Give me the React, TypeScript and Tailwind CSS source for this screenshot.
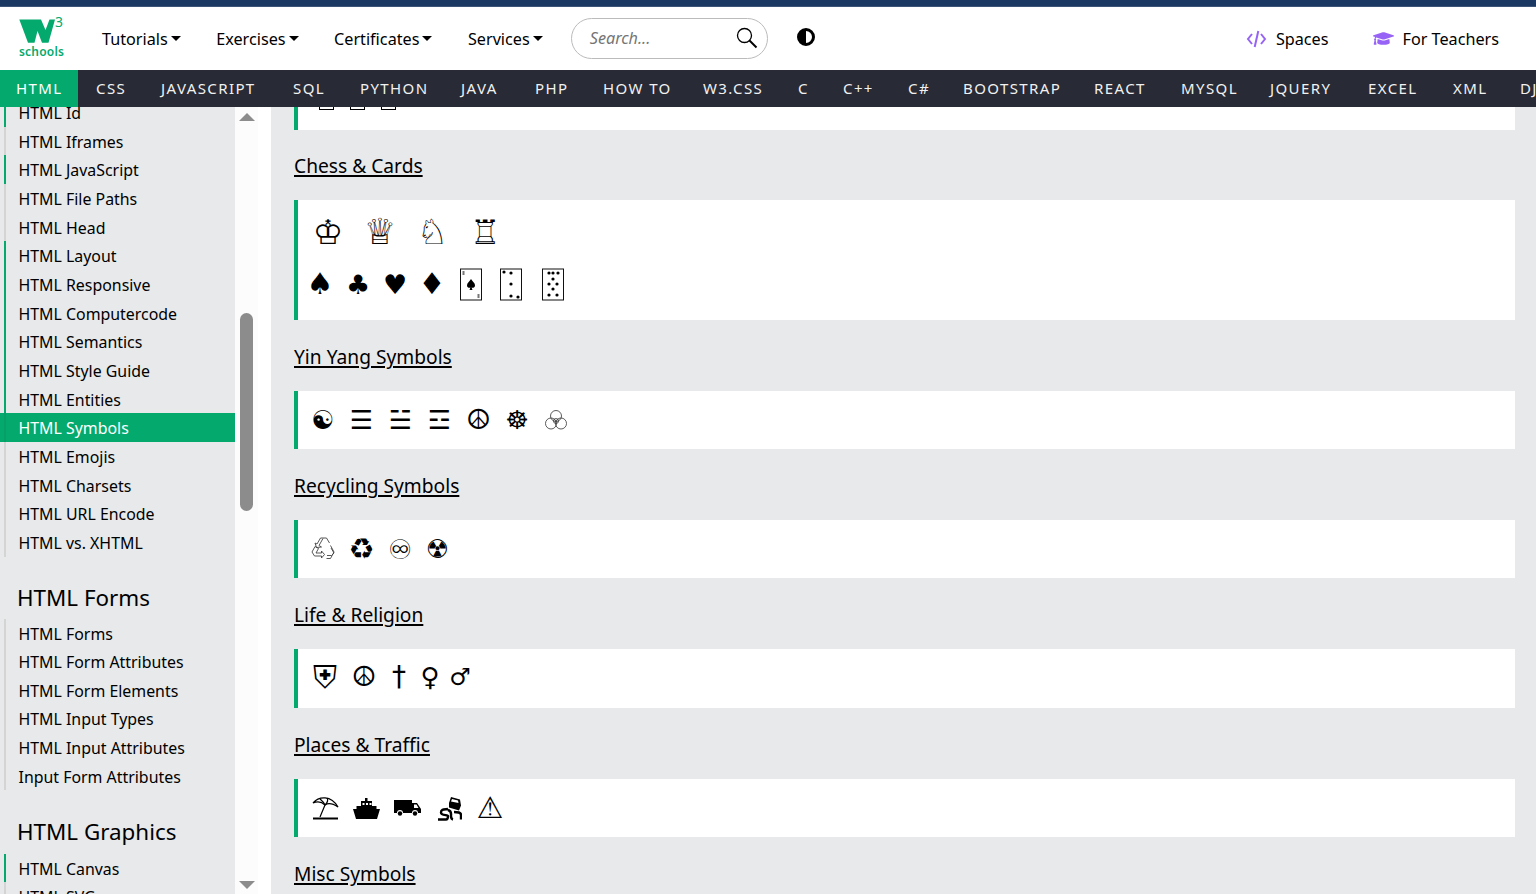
import type { ReactNode } from "react";
import { FaGraduationCap } from "react-icons/fa";

const topLinks = ["Tutorials", "Exercises", "Certificates", "Services"];
const subjects: [string, string][] = [
  ["CSS", "w-[65px]"], ["JAVASCRIPT", "w-[132px]"], ["SQL", "w-[67px]"], ["PYTHON", "w-[101px]"], ["JAVA", "w-[74px]"], ["PHP", "w-[68px]"],
  ["HOW TO", "w-[100px]"], ["W3.CSS", "w-[95px]"], ["C", "w-[45px]"], ["C++", "w-[65px]"], ["C#", "w-[55px]"], ["BOOTSTRAP", "w-[131px]"],
  ["REACT", "w-[87px]"], ["MYSQL", "w-[89px]"], ["JQUERY", "w-[98px]"], ["EXCEL", "w-[85px]"], ["XML", "w-[67px]"], ["DJANGO", "w-[100px]"],
];

const green = "bg-[#04AA6D]";
const gray = "bg-[#d4d4d4]";

const groupOne: [string, string][] = [
  ["HTML Id", green], ["HTML Iframes", gray], ["HTML JavaScript", green], ["HTML File Paths", gray], ["HTML Head", gray],
  ["HTML Layout", green], ["HTML Responsive", green], ["HTML Computercode", green], ["HTML Semantics", green], ["HTML Style Guide", green], ["HTML Entities", green],
  ["HTML Symbols", "bg-[#04a068]"], ["HTML Emojis", gray], ["HTML Charsets", gray], ["HTML URL Encode", gray], ["HTML vs. XHTML", gray],
];
const formLinks = ["HTML Forms", "HTML Form Attributes", "HTML Form Elements", "HTML Input Types", "HTML Input Attributes", "Input Form Attributes"];

function Pips({ pts, label }: { pts: [number, number][]; label: string }) {
  return (
    <svg viewBox="0 0 24 33" className="h-[33px] w-[24px]" aria-label={label}>
      <rect x="1.5" y="1" width="21" height="31" fill="white" stroke="#111" strokeWidth="1" />
      {pts.map(([x, y], i) => <circle key={i} cx={x} cy={y} r="1.6" fill="black" />)}
    </svg>
  );
}

const AceCard = (
  <svg viewBox="0 0 24 33" className="h-[33px] w-[24px]" aria-label="ace of spades">
    <rect x="1.5" y="1" width="21" height="31" fill="white" stroke="#111" strokeWidth="1" />
    <path d="M12 11c2 3 4 4 4 6.500a2.300 2.300 0 0 1-3.400 2l.9 2.500h-3l.9-2.500a2.300 2.300 0 0 1-3.400-2c0-2.500 2-3.500 4-6.500z" fill="black" />
    <rect x="3.500" y="3" width="2" height="4" fill="#777" />
    <rect x="18.500" y="26" width="2" height="4" fill="#777" />
  </svg>
);

const Biohazard = (
  <svg viewBox="0 0 24 24" className="h-[24px] w-[24px]" fill="none" stroke="#333" strokeWidth="0.8" aria-label="biohazard">
    <circle cx="12" cy="8" r="5.500" />
    <circle cx="7" cy="15.500" r="5.500" />
    <circle cx="17" cy="15.500" r="5.500" />
    <circle cx="12" cy="13" r="2.500" />
  </svg>
);

const Recycle = (
  <svg viewBox="0 0 24 24" className="h-[24px] w-[24px]" fill="none" stroke="#444" strokeWidth="0.9" aria-label="recycling">
    <path d="M12 1.500L8 8.500l2.500 1.500-5 .5L4 6l2 1 3.500-6h6l3 5" />
    <path d="M1 15l-.0 .0L4 9.500l3.500 2L5 16h5.500v-2l3 3.500-3 3.500v-2H3.500z" />
    <path d="M19.500 8.500L23 15l-3.500 6.500h-4M20 11l3 5-2.500 2.500H16" />
  </svg>
);

const Umbrella = (
  <svg viewBox="0 0 27 24" className="h-[24px] w-[27px]" fill="none" stroke="black" strokeWidth="1.200" aria-label="umbrella on ground">
    <path d="M1 7C7 0 19 -1 26 11C20 7 16 7 13 9C10 6 6 5 1 7z" />
    <path d="M13 9L8 21M8 3c1 1 4 3 5 6M15 2c2 3 0 5-2 7" />
    <path d="M1 22.500h25" strokeWidth="2" />
  </svg>
);

const Ship = (
  <svg viewBox="0 0 27 21" className="h-[21px] w-[27px]" aria-label="ferry">
    <path d="M12 0h2.500v3H19v5h4.500v3H27l-3 10H3L0 11h3.500V8H8V3h4z" fill="black" />
    <rect x="9.500" y="5" width="2" height="2" fill="white" />
    <rect x="13" y="5" width="2" height="2" fill="white" />
    <rect x="16.500" y="5" width="2" height="2" fill="white" />
  </svg>
);

const Truck = (
  <svg viewBox="0 0 28 16" className="h-[16px] w-[28px]" aria-label="truck">
    <path d="M0 0h18v3h5l4 6v4h-3a3 3 0 0 0-6 0H9a3 3 0 0 0-6 0H0z" fill="black" />
    <path d="M20 4.500h2.500l2 3.500H20z" fill="white" />
    <circle cx="6" cy="13.500" r="2.200" fill="black" />
    <circle cx="21" cy="13.500" r="2.200" fill="black" />
  </svg>
);

const Slip = (
  <svg viewBox="0 0 24 25" className="h-[25px] w-[24px]" aria-label="slippery road">
    <path d="M11 7l2-6 9 2.500 1 6-2 5-10-3z" fill="black" />
    <path d="M14 3l6 1.500.5 2.500-7.500-1.500z" fill="white" />
    <path d="M0 23.500h8c2 0 2-2 2-3.500s-7 0-7-3.500 3-3 7-3.500M10 14c4 1 3 4 3 6s0 3 2 3.500M16 16c4 0 7 0 7 3v4.500" fill="none" stroke="black" strokeWidth="2.400" />
  </svg>
);

type Item = { w: string; node: ReactNode; cls?: string };

const g = (c: string, w: string, cls: string): Item => ({ w, cls, node: c });

const sections: { title: string; h: string; pt: string; pl: string; rows: Item[][] }[] = [
  {
    title: "Chess & Cards", h: "h-[120px]", pt: "pt-[16px]", pl: "pl-[4px]",
    rows: [
      [g("♔", "w-[52px]", "text-[34px]"), g("♕", "w-[52px]", "text-[36px]"), g("♘", "w-[53px]", "text-[35px]"), g("♖", "w-[52px]", "text-[34px]")],
      [
        g("♠", "w-[38px] -ml-[1px]", "text-[30px]"), g("♣", "w-[38px]", "text-[27px]"), g("♥", "w-[36px]", "text-[27px]"), g("♦", "w-[38px]", "text-[30px]"),
        { w: "w-[39px]", node: AceCard },
        { w: "w-[42px]", node: <Pips label="seven of clubs" pts={[[12, 5], [12, 16], [12, 28], [5, 4], [19, 29]]} /> },
        { w: "w-[41px]", node: <Pips label="nine of clubs" pts={[[8, 5], [12, 5], [17, 5], [12, 11], [8, 16], [16, 16], [12, 21], [8, 27], [16, 27]]} /> },
      ],
    ],
  },
  {
    title: "Yin Yang Symbols", h: "h-[58px]", pt: "pt-[13px]", pl: "pl-[6px]",
    rows: [[
      g("☯", "w-[38px]", "text-[26px]"), g("☰", "w-[39px]", "text-[26px]"), g("☱", "w-[39px]", "text-[26px]"), g("☲", "w-[39px]", "text-[26px]"),
      g("☮", "w-[39px]", "text-[28px]"), g("☸", "w-[38px]", "text-[26px]"), { w: "w-[39px]", node: Biohazard },
    ]],
  },
  {
    title: "Recycling Symbols", h: "h-[58px]", pt: "pt-[13px]", pl: "pl-[6px]",
    rows: [[{ w: "w-[38px]", node: Recycle }, g("♻", "w-[39px]", "text-[29px]"), g("♾", "w-[38px]", "text-[27px]"), g("☢", "w-[37px]", "text-[26px]")]],
  },
  {
    title: "Life & Religion", h: "h-[59px]", pt: "pt-[12px]", pl: "pl-[7px]",
    rows: [[g("⛨", "w-[40px]", "text-[32px]"), g("☮", "w-[38px]", "text-[28px]"), g("†", "w-[32px]", "text-[28px]"), g("♀", "w-[30px]", "text-[26px]"), g("♂", "w-[30px]", "text-[24px]")]],
  },
  {
    title: "Places & Traffic", h: "h-[58px]", pt: "pt-[13px]", pl: "pl-[7px]",
    rows: [[
      { w: "w-[41px]", node: Umbrella }, { w: "w-[41px]", node: Ship }, { w: "w-[42px]", node: Truck }, { w: "w-[41px]", node: Slip },
      g("⚠", "w-[40px]", "text-[30px]"),
    ]],
  },
];

function SideLink({ label, bar, active }: { label: string; bar: string; active?: boolean }) {
  return (
    <div className={`flex h-[28.67px] text-[15.900px] leading-[30.67px] whitespace-nowrap ${active ? "bg-[#04AA6D] text-white" : "text-black"}`}>
      <span className={`ml-[4px] h-full w-[2px] shrink-0 ${bar}`} />
      <span className="pl-[12.500px]">{label}</span>
    </div>
  );
}

export default function App() {
  return (
    <div className="h-[894px] w-[1536px] overflow-hidden bg-white font-['Noto_Sans',sans-serif] text-black">
      <div className="h-[7px] border-b border-[#3b5478] bg-[#1a3861]" />
      <header className="flex h-[63px] items-center">
        <svg viewBox="18 14 48 48" className="mb-[1px] ml-[18px] h-[48px] w-[48px] text-[#04AA6D]" aria-label="W3Schools">
          <path d="M19.300 19.500H41L45.500 30 49.500 19.500H55L48.500 42.700H42L37.500 31 34.500 42.700H28z" fill="currentColor" />
          <text x="55" y="26.500" fontSize="14" fontFamily="Noto Sans" fill="currentColor">3</text>
          <text x="19" y="56" fontSize="12" fontWeight="600" letterSpacing="0.200" fontFamily="Noto Sans" fill="currentColor">schools</text>
        </svg>
        <nav className="ml-[36px] flex gap-[35.500px] pt-[1px] text-[16.200px]">
          {topLinks.map((t) => (
            <span key={t} className="flex items-center gap-[3px]">
              {t}
              <span className="h-0 w-0 border-x-[5px] border-t-[5px] border-x-transparent border-t-black" />
            </span>
          ))}
        </nav>
        <div className="ml-[28px] mb-[1px] flex h-[41px] w-[197px] items-center justify-between rounded-full border border-[#bbb] pl-[18px] pr-[9px]">
          <span className="pt-[1px] text-[16.200px] italic text-[#757575]">Search...</span>
          <svg viewBox="0 0 22 22" className="h-[22px] w-[22px]" fill="none" stroke="black" strokeWidth="1.300">
            <circle cx="8.500" cy="8.500" r="7" />
            <path d="M13.500 13.500l7 7" strokeWidth="2" />
          </svg>
        </div>
        <div className="mb-[3px] ml-[29px] h-[18px] w-[18px] rounded-full border-[3px] border-black bg-[linear-gradient(90deg,#000_50%,#fff_50%)]" />
        <div className="ml-auto flex items-center pt-[1px] text-[16.200px]">
          <svg viewBox="0 0 20 18" className="h-[18px] w-[21px]" fill="none" stroke="#9763f6" strokeWidth="2">
            <path d="M5.500 4L1.500 9l4 5M14.500 4l4 5-4 5" />
            <path d="M11.800 1L8.200 17" />
          </svg>
          <span className="ml-[9px]">Spaces</span>
          <FaGraduationCap className="ml-[45px] h-[21px] w-[21px] text-[#9763f6]" />
          <span className="ml-[8px] mr-[37px]">For Teachers</span>
        </div>
      </header>
      <nav className="flex h-[37px] overflow-hidden bg-[#282A35] text-[15px] leading-[37px] tracking-[1.400px] text-[#f1f1f1] whitespace-nowrap">
        <span className="w-[78px] shrink-0 bg-[#04AA6D] pl-[16px] text-white">HTML</span>
        <span className="w-[18px] shrink-0" />
        {subjects.map(([s, w]) => <span key={s} className={`shrink-0 ${w}`}>{s}</span>)}
      </nav>
      <div className="flex h-[787px]">
        <aside className="w-[235px] shrink-0 overflow-hidden bg-[#E7E9EB]">
          <div className="-mt-[9px]">
            {groupOne.map(([l, b]) => <SideLink key={l} label={l} bar={b} active={l === "HTML Symbols"} />)}
          </div>
          <h2 className="mt-[21px] pl-[17px] text-[22.400px] leading-[40px]">HTML Forms</h2>
          <div className="mt-[1px]">
            {formLinks.map((l) => <SideLink key={l} label={l} bar={gray} />)}
          </div>
          <h2 className="mt-[21.800px] pl-[17px] text-[22.400px] leading-[40px]">HTML Graphics</h2>
          <div className="mt-[1.500px]">
            <SideLink label="HTML Canvas" bar={green} />
            <SideLink label="HTML SVG" bar={gray} />
          </div>
        </aside>
        <div className="flex w-[23px] shrink-0 flex-col items-center bg-[#fcfcfc] pt-[6px] pb-[5px]">
          <span className="h-0 w-0 border-x-[8px] border-b-[8px] border-x-transparent border-b-[#8c8c8c]" />
          <span className="mt-[192px] h-[198px] w-[13px] rounded-full bg-[#8c8c8c]" />
          <span className="mt-auto h-0 w-0 border-x-[8px] border-t-[8px] border-x-transparent border-t-[#8c8c8c]" />
        </div>
        <div className="w-[13px] shrink-0" />
        <main className="flex-1 overflow-hidden bg-[#E7E9EB] pl-[23px] pr-[21px]">
          <div className="flex h-[23px] items-start gap-[16px] border-l-4 border-[#04AA6D] bg-white pl-[21px]">
            <span className="h-[3px] w-[15px] border-x border-b border-black" />
            <span className="h-[3px] w-[15px] border-x border-b border-black" />
            <span className="h-[3px] w-[15px] border-x border-b border-black" />
          </div>
          {sections.map((s, n) => (
            <section key={s.title}>
              <h2 className={`${n === 0 ? "mt-[21px]" : "mt-[22px]"} text-[19.200px] leading-[29.500px] underline decoration-2 underline-offset-[2px]`}>{s.title}</h2>
              <div className={`mt-[19.500px] flex flex-col gap-[20px] border-l-4 border-[#04AA6D] bg-white ${s.pt} ${s.pl} ${s.h}`}>
                {s.rows.map((r, i) => (
                  <div key={i} className="flex h-[32px] font-['DejaVu_Sans',sans-serif] leading-none">
                    {r.map((it, j) => (
                      <span key={j} className={`flex h-[32px] shrink-0 items-center justify-center ${it.w} ${it.cls ?? ""}`}>{it.node}</span>
                    ))}
                  </div>
                ))}
              </div>
            </section>
          ))}
          <h2 className="mt-[22px] text-[19.200px] leading-[29.500px] underline decoration-2 underline-offset-[2px]">Misc Symbols</h2>
        </main>
      </div>
    </div>
  );
}
